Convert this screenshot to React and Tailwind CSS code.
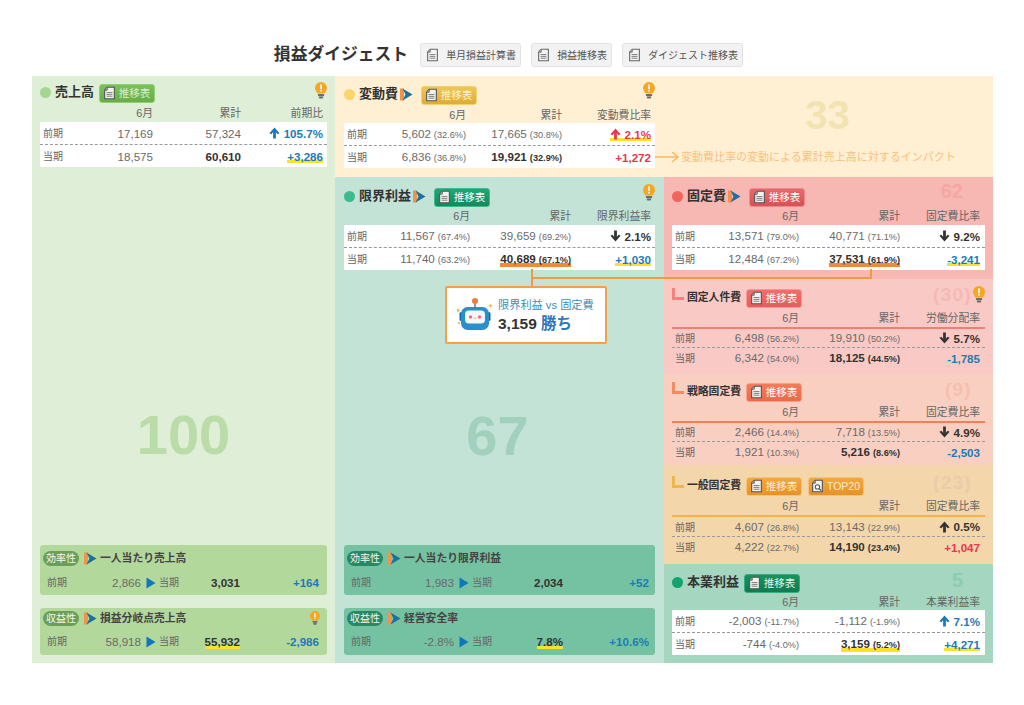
import React from "react";

const FONT = "font-['Liberation_Sans','Noto_Sans_CJK_JP',sans-serif]";
const BLUE = "text-[#1c7ab8]";
const RED = "text-[#e8384f]";

const HL = {
  y: "bg-[linear-gradient(transparent_78%,#f8e32c_78%)]",
  o: "bg-[linear-gradient(transparent_74%,#ee8a3a_74%)]",
};

function DocIcon({ light }) {
  return (
    <svg width="11" height="14" viewBox="0 0 12 14" className="shrink-0">
      <path d="M3.5 .7H11.3V13.3H.7V3.7Z" fill={light ? "#f1f1ee" : "#f4f4f4"} stroke={light ? "#555" : "#666"} strokeWidth="1.2" />
      <path d="M3.5 1V3.9H.9" fill="#bbb" stroke={light ? "#555" : "#666"} strokeWidth="1" />
      <path d="M2.8 6.5H9.2M2.8 8.5H9.2M2.8 10.5H9.2" stroke="#777" strokeWidth="1" />
    </svg>
  );
}

function SearchDocIcon() {
  return (
    <svg width="11" height="14" viewBox="0 0 12 14" className="shrink-0">
      <path d="M3.5 .7H11.3V13.3H.7V3.7Z" fill="#f1f1ee" stroke="#555" strokeWidth="1.2" />
      <path d="M3.5 1V3.9H.9" fill="#bbb" stroke="#555" strokeWidth="1" />
      <circle cx="6" cy="8" r="2.4" fill="#fff" stroke="#555" strokeWidth="1.1" />
      <path d="M7.8 9.8L10 12" stroke="#555" strokeWidth="1.4" />
    </svg>
  );
}

function Chevron() {
  return (
    <svg width="13" height="13" viewBox="0 0 13 13" className="shrink-0">
      <rect x="0" y="0.5" width="4" height="12" fill="#f0944a" />
      <path d="M2.5 .5L12.5 6.5L2.5 12.5L5.5 6.5Z" fill="#1d6f9c" />
    </svg>
  );
}

function Bulb({ w = 12, h = 17 }) {
  return (
    <svg width={w} height={h} viewBox="0 0 12 17" className="shrink-0">
      <path d="M6 0A6 6 0 0 1 12 6C12 8.5 10.3 9.6 9.6 11.5H2.4C1.7 9.6 0 8.5 0 6A6 6 0 0 1 6 0Z" fill="#f5a623" />
      <rect x="5.2" y="2.4" width="1.6" height="4.8" fill="#fff" />
      <rect x="5.2" y="8" width="1.6" height="1.5" fill="#fff" />
      <rect x="2.8" y="12" width="6.4" height="2.2" rx="1" fill="#6d6d6d" />
      <rect x="3.8" y="14.6" width="4.4" height="2" rx="1" fill="#6d6d6d" />
    </svg>
  );
}

function Arrow({ dir, color }) {
  return (
    <svg width="11" height="12" viewBox="0 0 11 12" className={"shrink-0 mr-[4px] " + (dir === "down" ? "rotate-180" : "")}>
      <path d="M5.5 .5L10.6 6.2L8.6 7.2L6.9 5.2V11.5H4.1V5.2L2.4 7.2L.4 6.2Z" fill={color} />
    </svg>
  );
}

function Tag({ cls, label = "推移表", search }) {
  return (
    <span className={"inline-flex items-center justify-center gap-[4px] h-[19px] w-[56px] translate-y-[1px] rounded-[3px] border text-[10.5px] leading-[14px] " + cls}>
      {search ? <SearchDocIcon /> : <DocIcon light />}
      <span>{label}</span>
    </span>
  );
}

function Num({ c }) {
  const weight = c.b ? "font-bold text-[#333]" : "text-[#6a6a6a]";
  return (
    <span className={"text-right whitespace-nowrap leading-[13px] " + weight}>
      <span className={"inline-block leading-[13px] " + (c.hl ? HL[c.hl] : "")}>
        <span className="text-[11.6px]">{c.n}</span>
        {c.p && <span className="text-[9.2px] ml-[3px]">{c.p}</span>}
      </span>
    </span>
  );
}

function Rate({ r }) {
  return (
    <span className="flex justify-end items-center whitespace-nowrap">
      <span className={"inline-flex items-center font-bold text-[11.6px] leading-[13px] " + r.c + " " + (r.hl ? HL[r.hl] : "")}>
        {r.a && <Arrow dir={r.a} color={r.ac} />}
        {r.t}
      </span>
    </span>
  );
}

function Row({ grid, label, m, t, r, h }) {
  return (
    <div className={"grid items-center pr-[4px] " + grid + " " + h}>
      <span className="pl-[3px] text-[10px] leading-[14px] text-[#666] whitespace-nowrap translate-y-[1px]">{label}</span>
      <Num c={m} />
      <Num c={t} />
      <Rate r={r} />
    </div>
  );
}

function Table({ grid, head, rows, variant, line, headMt, tableMt, r1 = "h-[22px]", r2 = "h-[22px]" }) {
  const white = variant === "white";
  return (
    <>
      <div className={"grid pr-[4px] text-[10.8px] leading-[14px] text-[#666] " + grid + " " + headMt}>
        <span />
        <span className="text-right">6月</span>
        <span className="text-right">累計</span>
        <span className="text-right whitespace-nowrap">{head}</span>
      </div>
      <div className={(white ? "bg-white " : "") + tableMt}>
        {line && <div className={"h-[2px] " + line} />}
        <Row grid={grid} label="前期" h={r1} {...rows[0]} />
        <div className="border-t border-dashed border-[#9a9a9a]" />
        <Row grid={grid} label="当期" h={r2} {...rows[1]} />
      </div>
    </>
  );
}

function Title({ dot, corner, text, size = "text-[13px]", chevron, tag, extra, pt, right }) {
  return (
    <div className={"flex items-center h-[20px] " + pt}>
      {dot && <span className={"w-[11px] h-[11px] rounded-full shrink-0 mr-[4px] " + dot} />}
      {corner && (
        <span className={"w-[12px] h-[12px] border-l-[3px] border-b-[3px] mr-[3px] -mt-[6px] shrink-0 " + corner} />
      )}
      <span className={"font-bold text-[#333] whitespace-nowrap " + size}>{text}</span>
      {chevron && (
        <span className="ml-[2px] mr-[8px]">
          <Chevron />
        </span>
      )}
      {!chevron && <span className="w-[5px]" />}
      {tag}
      {extra}
      <span className="ml-auto flex items-center">{right}</span>
    </div>
  );
}

function Card({ pill, pillCls, text, bg, prev, cur, diff, hl, bulb, grid, headH, rowH }) {
  return (
    <div className={"rounded-[3px] px-[3px] " + bg}>
      <div className={"flex items-center " + headH}>
        <span className={"rounded-full text-[10px] text-[#f2f8ee] px-[3px] leading-[15px] shrink-0 " + pillCls}>{pill}</span>
        <span className="ml-[5px] mr-[3px]">
          <Chevron />
        </span>
        <span className="font-bold text-[10.8px] text-[#444] whitespace-nowrap">{text}</span>
        {bulb && (
          <span className="ml-auto mr-[4px]">
            <Bulb w={10} h={14} />
          </span>
        )}
      </div>
      <div className={"grid items-center pl-[4px] " + grid + " " + rowH}>
        <span className="flex justify-between items-center leading-[14px]">
          <span className="text-[10px] text-[#666]">前期</span>
          <span className="text-[11.6px] text-[#6a6a6a]">{prev}</span>
        </span>
        <span className="flex items-center leading-[14px]">
          <span className="w-[5px]" />
          <svg width="10" height="12" viewBox="0 0 10 12" className="shrink-0">
            <path d="M.5 .5L9.5 6L.5 11.5Z" fill="#0f78bd" />
          </svg>
          <span className="ml-[3px] text-[10px] text-[#666] whitespace-nowrap">当期</span>
        </span>
        <span className="text-right text-[11.6px] font-bold text-[#333] leading-[14px]">
          <span className={"inline-block leading-[14px] " + (hl ? HL.y : "")}>{cur}</span>
        </span>
        <span className={"text-right text-[11.6px] font-bold leading-[14px] " + BLUE}>{diff}</span>
      </div>
    </div>
  );
}

function Cards({ a, b, color, grid }) {
  return (
    <div className="flex flex-col gap-[13px] mt-auto pb-[8px]">
      <Card {...a} grid={grid} bg={color} headH="h-[26px]" rowH="h-[24px]" />
      <Card {...b} grid={grid} bg={color} headH="h-[20px]" rowH="h-[27px]" />
    </div>
  );
}

const TOPBTN = ["単月損益計算書", "損益推移表", "ダイジェスト推移表"];

function Robot() {
  return (
    <svg width="36" height="36" viewBox="0 0 36 36" className="shrink-0">
      <path d="M18 6V10" stroke="#6b7f8c" strokeWidth="1.6" />
      <circle cx="18" cy="4" r="3" fill="#ef7d3a" />
      <rect x="2.5" y="15" width="3" height="9" rx="1.5" fill="#0e6da8" />
      <rect x="30.5" y="15" width="3" height="9" rx="1.5" fill="#0e6da8" />
      <rect x="4" y="10" width="28" height="23" rx="6.5" fill="#2a90cc" />
      <rect x="8" y="13.5" width="20" height="13" rx="4" fill="#f5f8fa" />
      <circle cx="13.5" cy="20" r="1.7" fill="#f46a7c" />
      <circle cx="22.5" cy="20" r="1.7" fill="#f46a7c" />
      <rect x="16.5" y="20.5" width="3" height="1.6" fill="#e9c9a6" />
      <path d="M1 11L1.8 12.7L3.5 13.5L1.8 14.3L1 16L.2 14.3L-1 13.5L.2 12.7Z" fill="#f4b14a" />
      <path d="M33.5 6.5L34.2 8L35.8 8.7L34.2 9.4L33.5 11L32.8 9.4L31.2 8.7L32.8 8Z" fill="#f4b14a" />
      <path d="M2 24L2.6 25.4L4 26L2.6 26.6L2 28L1.4 26.6L0 26L1.4 25.4Z" fill="#f4b14a" />
    </svg>
  );
}

const G_A = "grid-cols-[40px_73px_88px_82px]";
const G_B = "grid-cols-[40px_82px_96px_89px]";
const G_C = "grid-cols-[40px_86px_101px_80px]";
const G_D = "grid-cols-[40px_87px_101px_80px]";
const CG_L = "grid-cols-[94px_40px_59px_79px]";
const CG_M = "grid-cols-[103px_40px_69px_86px]";

export default function App() {
  return (
    <div className={"w-[1024px] h-[705px] bg-white overflow-hidden " + FONT}>
      <div className="flex items-center justify-center h-[76px] pt-[34px] pr-[7px]">
        <h1 className="text-[16.8px] font-bold text-[#333] mr-[12px] whitespace-nowrap">損益ダイジェスト</h1>
        <div className="flex gap-[10px]">
          {TOPBTN.map((t) => (
            <span key={t} className="flex items-center gap-[8px] h-[24px] pl-[6px] pr-[4px] bg-[#f2f2f2] border border-[#e2e2e2] rounded-[3px] text-[10px] text-[#555] whitespace-nowrap">
              <DocIcon />
              <span>{t}</span>
            </span>
          ))}
        </div>
      </div>

      <div className="relative flex w-[961px] h-[587px] ml-[32px]">
        {/* 売上高 */}
        <section className="flex flex-col w-[303px] h-full bg-[#dfeed6] px-[8px]">
          <Title
            pt="mt-[6px]"
            dot="bg-[#a5d68d]"
            text="売上高"
            tag={<Tag cls="bg-[linear-gradient(#7cc05c,#68ad49)] border-[#90cf72] text-[#d8f0ca]" />}
            right={<span className="-mt-[3px]"><Bulb /></span>}
          />
          <Table
            variant="white"
            grid={G_A}
            head="前期比"
            headMt="mt-[4px]"
            tableMt="mt-[2px]"
            rows={[
              { m: { n: "17,169" }, t: { n: "57,324" }, r: { t: "105.7%", c: BLUE, a: "up", ac: "#1c7ab8" } },
              { m: { n: "18,575" }, t: { n: "60,610", b: true }, r: { t: "+3,286", c: BLUE, hl: "y" } },
            ]}
          />
          <div className="mt-[240px] h-[56px] leading-[56px] text-center text-[56px] font-bold text-[#b9dca8]">100</div>
          <Cards
            color="bg-[#b3d89c]"
            grid={CG_L}
            a={{ pill: "効率性", pillCls: "bg-[#6d9e57]", text: "一人当たり売上高", prev: "2,866", cur: "3,031", diff: "+164" }}
            b={{ pill: "収益性", pillCls: "bg-[#6d9e57]", text: "損益分岐点売上高", prev: "58,918", cur: "55,932", diff: "-2,986", hl: true, bulb: true }}
          />
        </section>

        <div className="flex flex-col w-[658px] h-full">
          {/* top band */}
          <div className="flex h-[101px] bg-[#fff0d3]">
            <section className="w-[329px] px-[9px]">
              <Title
                pt="mt-[8px]"
                dot="bg-[#fdd56a]"
                text="変動費"
                chevron
                tag={<Tag cls="bg-[linear-gradient(#eec757,#e0ab32)] border-[#f2d172] text-[#fff3cf]" />}
                right={<span className="-mt-[8px]"><Bulb /></span>}
              />
              <Table
                variant="white"
                grid={G_B}
                head="変動費比率"
                headMt="mt-[4px]"
                tableMt="mt-[1px]"
                rows={[
                  { m: { n: "5,602", p: "(32.6%)" }, t: { n: "17,665", p: "(30.8%)" }, r: { t: "2.1%", c: RED, a: "up", ac: "#e8384f", hl: "y" } },
                  { m: { n: "6,836", p: "(36.8%)" }, t: { n: "19,921", p: "(32.9%)", b: true }, r: { t: "+1,272", c: RED } },
                ]}
              />
            </section>
            <div className="flex-1 flex flex-col items-center">
              <div className="mt-[17px] h-[44px] leading-[44px] text-[40px] font-bold text-[#f3e3b3] -translate-x-[1px]">33</div>
              <div className="flex items-center self-start mt-[12px] -ml-[9px] whitespace-nowrap">
                <svg width="24" height="12" viewBox="0 0 24 12" className="shrink-0 mr-[2px]">
                  <path d="M0 6H22M17 1L23 6L17 11" fill="none" stroke="#f8b868" strokeWidth="1.6" />
                </svg>
                <span className="text-[11px] text-[#f8c082]">変動費比率の変動による累計売上高に対するインパクト</span>
              </div>
            </div>
          </div>

          <div className="flex h-[486px]">
            {/* 限界利益 */}
            <section className="flex flex-col w-[329px] h-full bg-[#c3e3d7] px-[9px]">
              <Title
                pt="mt-[9px]"
                dot="bg-[#3dbb8c]"
                text="限界利益"
                chevron
                tag={<Tag cls="bg-[linear-gradient(#1fa676,#14895f)] border-[#3fba8c] text-white" />}
                right={<span className="-mt-[8px]"><Bulb /></span>}
              />
              <Table
                variant="white"
                grid={G_C}
                head="限界利益率"
                headMt="mt-[3px]"
                tableMt="mt-[2px]"
                rows={[
                  { m: { n: "11,567", p: "(67.4%)" }, t: { n: "39,659", p: "(69.2%)" }, r: { t: "2.1%", c: "text-[#333]", a: "down", ac: "#333" } },
                  { m: { n: "11,740", p: "(63.2%)" }, t: { n: "40,689", p: "(67.1%)", b: true, hl: "o" }, r: { t: "+1,030", c: BLUE, hl: "y" } },
                ]}
              />
              <div className="mt-[138px] h-[56px] leading-[56px] text-center text-[56px] font-bold text-[#a1d1bd] -translate-x-[2px]">67</div>
              <Cards
                color="bg-[#74c2a2]"
                grid={CG_M}
                a={{ pill: "効率性", pillCls: "bg-[#2a8763]", text: "一人当たり限界利益", prev: "1,983", cur: "2,034", diff: "+52" }}
                b={{ pill: "収益性", pillCls: "bg-[#2a8763]", text: "経営安全率", prev: "-2.8%", cur: "7.8%", diff: "+10.6%", hl: true }}
              />
            </section>

            {/* right column */}
            <div className="flex flex-col w-[329px]">
              <section className="h-[102px] bg-[#f7b7b2] px-[8px]">
                <Title
                  pt="mt-[9px]"
                  dot="bg-[#f0665f]"
                  text="固定費"
                  chevron
                  tag={<Tag cls="bg-[linear-gradient(#e8686c,#d95057)] border-[#ee8a8a] text-white" />}
                  right={<span className="mr-[22px] -mt-[11px] text-[20px] font-bold text-[#f4a8a3]">62</span>}
                />
                <Table
                  variant="white"
                  grid={G_D}
                  head="固定費比率"
                  headMt="mt-[3px]"
                  tableMt="mt-[2px]"
                  rows={[
                    { m: { n: "13,571", p: "(79.0%)" }, t: { n: "40,771", p: "(71.1%)" }, r: { t: "9.2%", c: "text-[#333]", a: "down", ac: "#333" } },
                    { m: { n: "12,484", p: "(67.2%)" }, t: { n: "37,531", p: "(61.9%)", b: true, hl: "o" }, r: { t: "-3,241", c: BLUE, hl: "y" } },
                  ]}
                />
              </section>

              <section className="h-[95px] bg-[#f9c9c5] px-[8px]">
                <Title
                  pt="mt-[8px]"
                  corner="border-[#f0837c]"
                  text="固定人件費"
                  size="text-[10.8px]"
                  tag={<Tag cls="bg-[linear-gradient(#ee6f6c,#e65c5c)] border-[#f39a96] text-white" />}
                  right={
                    <>
                      <span className="text-[19px] font-bold text-[#f5b9b4] -mt-[4px] tracking-[1.3px]">(30)</span>
                      <span className="-mt-[6px] ml-[1px]"><Bulb /></span>
                    </>
                  }
                />
                <Table
                  grid={G_D}
                  head="労働分配率"
                  line="bg-[#ef7f73]"
                  headMt="mt-[4px]"
                  tableMt="mt-[2px]"
                  r1="h-[18px]"
                  r2="h-[20px]"
                  rows={[
                    { m: { n: "6,498", p: "(56.2%)" }, t: { n: "19,910", p: "(50.2%)" }, r: { t: "5.7%", c: "text-[#333]", a: "down", ac: "#333" } },
                    { m: { n: "6,342", p: "(54.0%)" }, t: { n: "18,125", p: "(44.5%)", b: true }, r: { t: "-1,785", c: BLUE } },
                  ]}
                />
              </section>

              <section className="h-[91px] bg-[#f9cfc2] px-[8px]">
                <Title
                  pt="mt-[7px]"
                  corner="border-[#f28a62]"
                  text="戦略固定費"
                  size="text-[10.8px]"
                  tag={<Tag cls="bg-[linear-gradient(#f27c5c,#ec6a4a)] border-[#f6a288] text-white" />}
                  right={<span className="mr-[13px] text-[19px] font-bold text-[#f5c0ae] -mt-[1px] tracking-[1.3px]">(9)</span>}
                />
                <Table
                  grid={G_D}
                  head="固定費比率"
                  line="bg-[#f0805a]"
                  headMt="mt-[4px]"
                  tableMt="mt-[2px]"
                  r1="h-[18px]"
                  r2="h-[20px]"
                  rows={[
                    { m: { n: "2,466", p: "(14.4%)" }, t: { n: "7,718", p: "(13.5%)" }, r: { t: "4.9%", c: "text-[#333]", a: "down", ac: "#333" } },
                    { m: { n: "1,921", p: "(10.3%)" }, t: { n: "5,216", p: "(8.6%)", b: true }, r: { t: "-2,503", c: BLUE } },
                  ]}
                />
              </section>

              <section className="h-[99px] bg-[#f4d6ab] px-[8px]">
                <Title
                  pt="mt-[10px]"
                  corner="border-[#eeb54c]"
                  text="一般固定費"
                  size="text-[10.8px]"
                  tag={<Tag cls="bg-[linear-gradient(#f2a83e,#e69228)] border-[#f6c478] text-[#fdeccf]" />}
                  extra={
                    <span className="ml-[6px] flex">
                      <Tag label="TOP20" search cls="bg-[linear-gradient(#f2a83e,#e69228)] border-[#f6c478] text-[#fdeccf]" />
                    </span>
                  }
                  right={<span className="mr-[13px] text-[19px] font-bold text-[#e9ccaa] -mt-[3px] tracking-[1.3px]">(23)</span>}
                />
                <Table
                  grid={G_D}
                  head="固定費比率"
                  line="bg-[#f0b24c]"
                  headMt="mt-[4px]"
                  tableMt="mt-[2px]"
                  r1="h-[19px]"
                  r2="h-[20px]"
                  rows={[
                    { m: { n: "4,607", p: "(26.8%)" }, t: { n: "13,143", p: "(22.9%)" }, r: { t: "0.5%", c: "text-[#333]", a: "up", ac: "#333" } },
                    { m: { n: "4,222", p: "(22.7%)" }, t: { n: "14,190", p: "(23.4%)", b: true }, r: { t: "+1,047", c: RED } },
                  ]}
                />
              </section>

              <section className="flex-1 bg-[#a5d6bf] px-[8px]">
                <Title
                  pt="mt-[8px]"
                  dot="bg-[#12a36f]"
                  text="本業利益"
                  tag={<Tag cls="bg-[linear-gradient(#17935f,#0e7c50)] border-[#37ab7e] text-[#e2f5ea]" />}
                  right={<span className="mr-[22px] -mt-[5px] text-[20px] font-bold text-[#8fcbb0]">5</span>}
                />
                <Table
                  variant="white"
                  grid={G_D}
                  head="本業利益率"
                  headMt="mt-[3px]"
                  tableMt="mt-[1px]"
                  rows={[
                    { m: { n: "-2,003", p: "(-11.7%)" }, t: { n: "-1,112", p: "(-1.9%)" }, r: { t: "7.1%", c: BLUE, a: "up", ac: "#1c7ab8" } },
                    { m: { n: "-744", p: "(-4.0%)" }, t: { n: "3,159", p: "(5.2%)", b: true, hl: "y" }, r: { t: "+4,271", c: BLUE, hl: "y" } },
                  ]}
                />
              </section>
            </div>
          </div>
        </div>

        {/* connector overlay */}
        <div className="absolute left-[499px] top-[193px] w-[2px] h-[18px] bg-[#f09a44]" />
        <div className="absolute left-[499px] top-[201px] w-[341px] h-[2px] bg-[#f09a44]" />
        <div className="absolute left-[838px] top-[193px] w-[2px] h-[9px] bg-[#f09a44]" />
        <div className="absolute left-[413px] top-[210px] w-[162px] h-[58px] bg-white border-2 border-[#f2a04e] rounded-[2px] flex items-center pl-[10px] gap-[5px]">
          <Robot />
          <div className="flex flex-col">
            <span className="text-[11.2px] leading-[16px] text-[#3f8fc0] whitespace-nowrap">限界利益 vs 固定費</span>
            <span className="mt-[1px] text-[15.5px] leading-[20px] font-bold text-[#333] whitespace-nowrap">
              3,159 <span className="text-[#2f76b8]">勝ち</span>
            </span>
          </div>
        </div>
      </div>
    </div>
  );
}
